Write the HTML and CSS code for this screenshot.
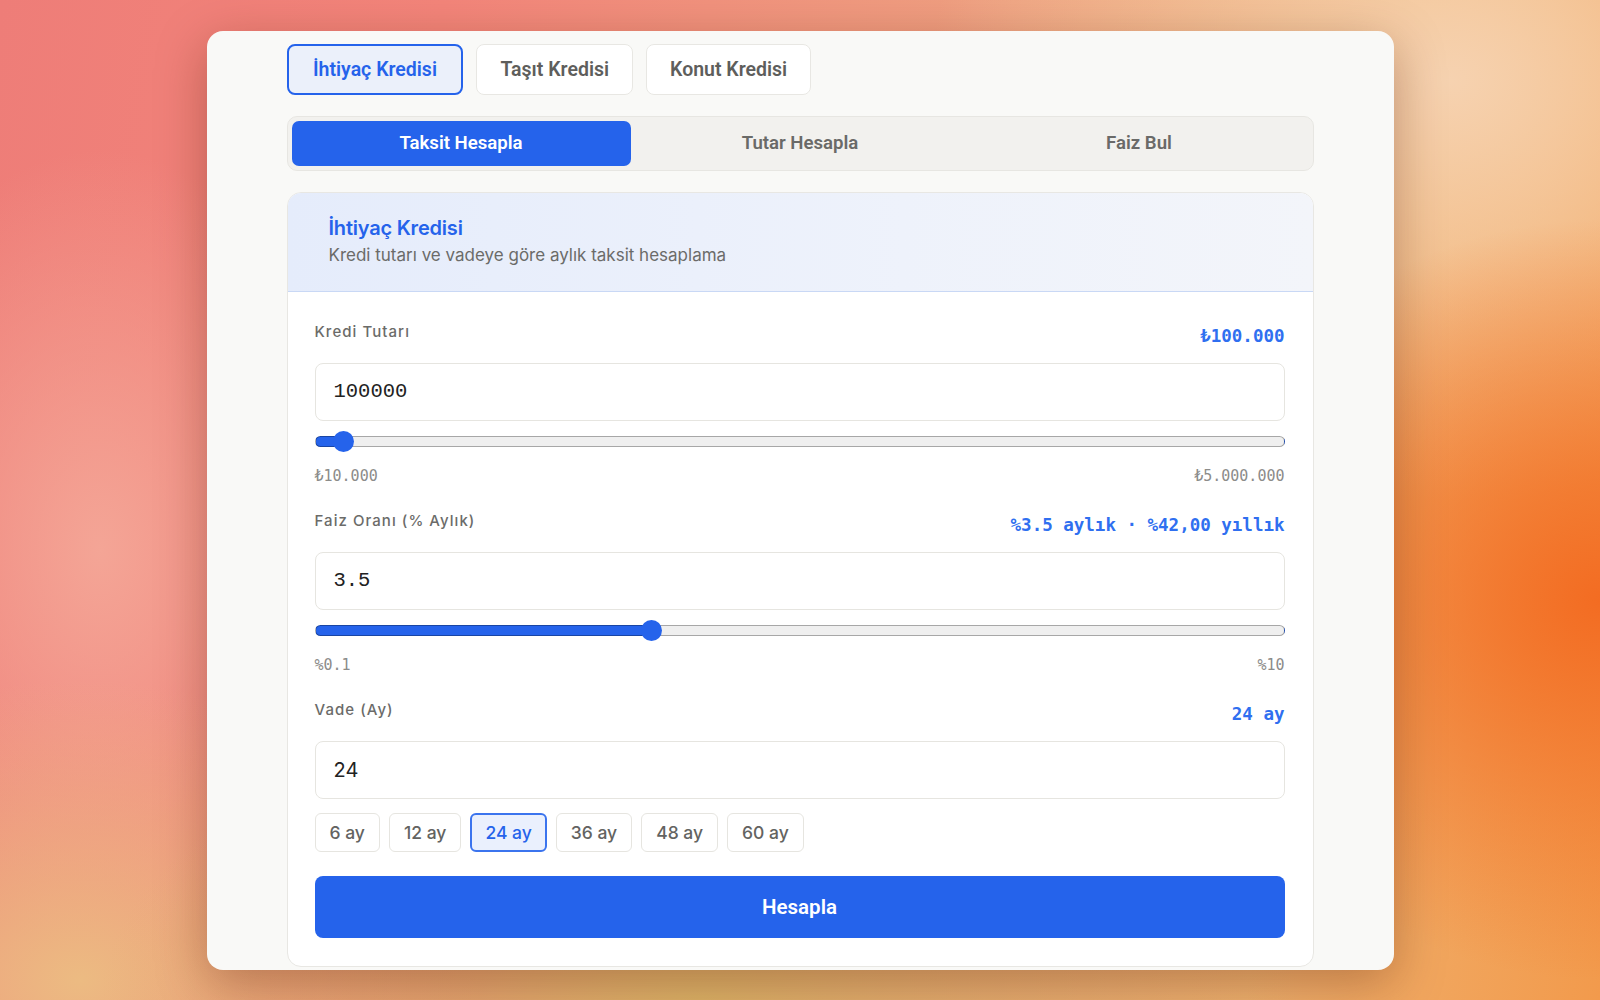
FILE: index.html
```html
<!DOCTYPE html>
<html lang="tr">
<head>
    <meta charset="UTF-8">
    <meta name="viewport" content="width=device-width, initial-scale=1.0">
    <title>Kredi Hesaplama</title>
    <link rel="stylesheet" href="styles.css">
</head>
<body>
    <div class="window">
        <div class="types">
            <button class="type active">İhtiyaç Kredisi</button>
            <button class="type">Taşıt Kredisi</button>
            <button class="type">Konut Kredisi</button>
        </div>

        <div class="modes">
            <button class="mode active">Taksit Hesapla</button>
            <button class="mode">Tutar Hesapla</button>
            <button class="mode">Faiz Bul</button>
        </div>

        <div class="card">
            <div class="card-head">
                <h2>İhtiyaç Kredisi</h2>
                <p>Kredi tutarı ve vadeye göre aylık taksit hesaplama</p>
            </div>

            <div class="card-body">
                <div class="field">
                    <div class="field-top">
                        <label for="tutar">Kredi Tutarı</label>
                        <span class="val">₺100.000</span>
                    </div>
                    <input class="num" type="number" id="tutar" value="100000">
                    <input class="range" type="range" min="10000" max="5000000" value="100000" style="--fill: 2.8%">
                    <div class="limits">
                        <span>₺10.000</span>
                        <span>₺5.000.000</span>
                    </div>
                </div>

                <div class="field">
                    <div class="field-top">
                        <label for="faiz">Faiz Oranı (% Aylık)</label>
                        <span class="val">%3.5 aylık · %42,00 yıllık</span>
                    </div>
                    <input class="num" type="number" id="faiz" value="3.5" step="0.1">
                    <input class="range" type="range" min="0.1" max="10" step="0.1" value="3.5" style="--fill: 34.7%">
                    <div class="limits">
                        <span>%0.1</span>
                        <span>%10</span>
                    </div>
                </div>

                <div class="field">
                    <div class="field-top">
                        <label for="vade">Vade (Ay)</label>
                        <span class="val">24 ay</span>
                    </div>
                    <input class="num sans" type="number" id="vade" value="24">
                    <div class="chips">
                        <button class="chip">6 ay</button>
                        <button class="chip">12 ay</button>
                        <button class="chip active">24 ay</button>
                        <button class="chip">36 ay</button>
                        <button class="chip">48 ay</button>
                        <button class="chip">60 ay</button>
                    </div>
                </div>

                <button class="submit">Hesapla</button>
            </div>
        </div>
    </div>
</body>
</html>
```

FILE: styles.css
```css
html, body{
    margin: 0;
    height: 100%;
}

body{
    display: flex;
    align-items: center;
    justify-content: center;
    font-family: Inter, 'Noto Sans', sans-serif;
    background-color: #f19a80;
    background-image:
        radial-gradient(ellipse 420px 380px at 1600px 600px, #f36c22 0%, rgba(243, 108, 34, 0) 100%),
        radial-gradient(ellipse 520px 420px at 1450px 80px, #f6d2b0 0%, rgba(246, 210, 176, 0) 100%),
        radial-gradient(ellipse 600px 300px at 700px 1000px, #dcb468 0%, rgba(220, 180, 104, 0) 100%),
        radial-gradient(ellipse 400px 300px at 80px 980px, #ecbb82 0%, rgba(236, 187, 130, 0) 100%),
        radial-gradient(ellipse 260px 400px at 100px 550px, #f4a596 0%, rgba(244, 165, 150, 0) 100%),
        linear-gradient(100deg, #ee7d78 0%, #f3857a 25%, #ef9f80 55%, #f0b270 80%, #f29a4c 100%);
}

.window{
    width: 1187px;
    height: 939px;
    box-sizing: border-box;
    padding: 13px 80px 0;
    background-color: #f9f9f7;
    border-radius: 16px;
    overflow: hidden;
    box-shadow: 0 14px 50px rgba(90, 30, 10, 0.35);
}

button{
    font-family: Roboto, 'Liberation Sans', sans-serif;
    cursor: pointer;
}

.types{
    display: flex;
    gap: 13px;
}

.type{
    height: 51px;
    padding: 0 23px;
    background-color: #fff;
    border: 1.5px solid #e8e7e3;
    border-radius: 8px;
    font-size: 19.5px;
    font-weight: 600;
    color: #5e5e5c;
}

.type.active{
    padding: 0 24.5px;
    background-color: #ebf0fa;
    border: 2px solid #2563eb;
    color: #2563eb;
}

.modes{
    display: grid;
    grid-template-columns: 1fr 1fr 1fr;
    margin-top: 21px;
    padding: 4px;
    height: 55px;
    box-sizing: border-box;
    background-color: #f2f1ee;
    border: 1.5px solid #e7e6e2;
    border-radius: 10px;
}

.mode{
    border: none;
    background: none;
    border-radius: 7px;
    font-size: 18.6px;
    font-weight: 600;
    color: #6a6a68;
}

.mode.active{
    background-color: #2563eb;
    color: #fff;
}

.card{
    margin-top: 21px;
    background-color: #fff;
    border: 1px solid #e8e7e3;
    border-radius: 14px;
    overflow: hidden;
}

.card-head{
    padding: 22px 41px 25px;
    background: linear-gradient(90deg, #e5ecfb 0%, #eef2fb 60%, #f3f5fa 100%);
    border-bottom: 1px solid #c9d8f5;
}

.card-head h2{
    margin: 0;
    font-size: 20px;
    line-height: 26px;
    font-weight: 600;
    letter-spacing: -0.01em;
    color: #2563eb;
}

.card-head p{
    margin: 3px 0 0;
    font-size: 17px;
    line-height: 22px;
    color: #6b6b69;
}

.card-body{
    padding: 32px 28px 28px 27px;
}

.field + .field{
    margin-top: 27px;
}

.field-top{
    display: flex;
    justify-content: space-between;
    height: 24px;
    margin-bottom: 15px;
}

.field-top label{
    font-size: 15px;
    line-height: 15px;
    font-weight: 500;
    letter-spacing: 0.07em;
    color: #6b6b69;
}

.val{
    font-family: 'DejaVu Sans Mono', monospace;
    font-size: 17.5px;
    line-height: 24px;
    font-weight: bold;
    color: #2f6ff0;
}

.num{
    display: block;
    width: 100%;
    height: 58px;
    box-sizing: border-box;
    padding: 0 18px;
    background-color: #fff;
    border: 1.5px solid #e6e5e0;
    border-radius: 8px;
    font-family: 'Liberation Mono', monospace;
    font-size: 20.5px;
    color: #222;
    outline: none;
}

.num.sans{
    font-family: Inter, sans-serif;
    font-size: 20px;
}

.num::-webkit-inner-spin-button,
.num::-webkit-outer-spin-button{
    -webkit-appearance: none;
    margin: 0;
}

.range{
    -webkit-appearance: none;
    appearance: none;
    display: block;
    width: 100%;
    height: 11px;
    margin: 15px 0 0;
    box-sizing: border-box;
    border: 1px solid rgba(0, 0, 0, 0.3);
    border-radius: 6px;
    background: linear-gradient(90deg, #2563eb var(--fill), #efefef var(--fill));
    background-clip: border-box;
}

.range::-webkit-slider-thumb{
    -webkit-appearance: none;
    width: 21px;
    height: 21px;
    border-radius: 50%;
    background-color: #2563eb;
    border: none;
}

.limits{
    display: flex;
    justify-content: space-between;
    margin-top: 20px;
    font-family: 'DejaVu Sans Mono', monospace;
    font-size: 15px;
    line-height: 19px;
    color: #8c8c8a;
}

.chips{
    display: flex;
    gap: 9px;
    margin-top: 14px;
}

.chip{
    height: 39px;
    padding: 0 14px;
    background-color: #fff;
    border: 1.5px solid #e6e5e0;
    border-radius: 6px;
    font-family: Inter, sans-serif;
    font-size: 17.5px;
    font-weight: 500;
    color: #636361;
}

.chip.active{
    padding: 0 13px;
    background-color: #eaf0fd;
    border: 2px solid #3b74ee;
    color: #2563eb;
}

.submit{
    display: block;
    width: 100%;
    height: 62px;
    margin-top: 24px;
    background-color: #2563eb;
    border: none;
    border-radius: 8px;
    font-size: 20.5px;
    font-weight: 600;
    color: #fff;
}
```
